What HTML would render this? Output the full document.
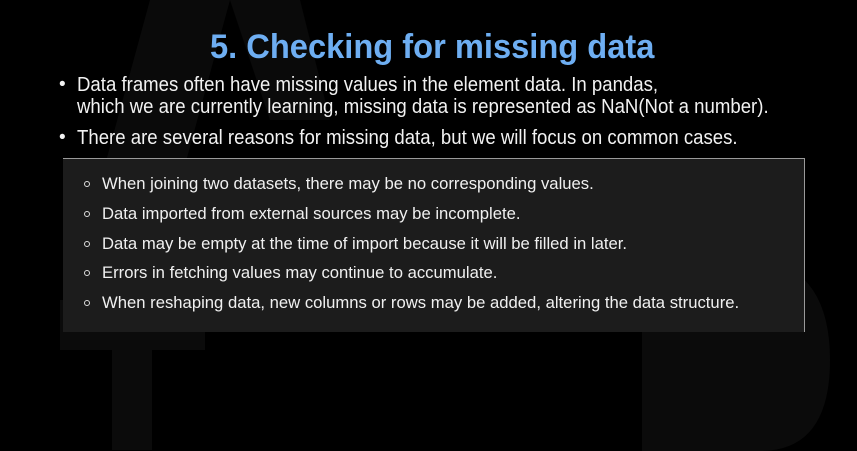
<!DOCTYPE html>
<html><head><meta charset="utf-8"><style>
html,body{margin:0;padding:0;background:#000;}
body{width:857px;height:451px;position:relative;overflow:hidden;font-family:"Liberation Sans","Noto Sans CJK KR",sans-serif;color:#f2f2f2;}
.t{position:absolute;white-space:nowrap;transform-origin:0 50%;}
.s{white-space:nowrap;height:29.8px;line-height:29.8px;position:relative;}
.s b{position:absolute;left:0;top:12px;width:4px;height:4px;border:1.3px solid #ddd;border-radius:50%;}
.s span{position:absolute;left:18px;display:inline-block;transform:scaleX(0.98);transform-origin:0 50%;}
</style></head><body>
<svg style="position:absolute;left:0;top:0" width="857" height="451">
<polygon points="60,330 150,0 230,0 140,330" fill="#0a0a0a"/>
<polygon points="230,0 300,0 330,120 270,120" fill="#0a0a0a"/>
<rect x="60" y="300" width="145" height="50" fill="#0b0b0b"/>
<rect x="112" y="260" width="40" height="190" fill="#0b0b0b"/>
<path d="M642 258 H760 Q830 270 830 360 Q830 451 760 451 H642 Z" fill="#0b0b0b"/>
</svg>
<div class="t" style="left:210px;top:27px;font-size:34px;font-weight:bold;color:#6eaef2;transform:scaleX(0.96);line-height:40px;">5. Checking for missing data</div>
<div class="t" style="left:59px;top:74px;font-size:19px;line-height:22px;">•</div>
<div class="t" style="left:77px;top:74px;font-size:20px;line-height:22px;transform:scaleX(0.93);">Data frames often have missing values in the element data. In pandas,</div>
<div class="t" style="left:77px;top:96px;font-size:20px;line-height:22px;transform:scaleX(0.93);">which we are currently learning, missing data is represented as NaN(Not a number).</div>
<div class="t" style="left:59px;top:127px;font-size:19px;line-height:22px;">•</div>
<div class="t" style="left:77px;top:127px;font-size:20px;line-height:22px;transform:scaleX(0.93);">There are several reasons for missing data, but we will focus on common cases.</div>
<div style="position:absolute;left:63px;top:158px;width:741px;height:173px;background:#1c1c1c;border-top:1px solid #9a9a9a;border-right:1px solid #9a9a9a;"></div>
<div style="position:absolute;left:84px;top:169px;font-size:17px;color:#f0f0f0;">
<div class="s"><b></b><span>When joining two datasets, there may be no corresponding values.</span></div>
<div class="s"><b></b><span>Data imported from external sources may be incomplete.</span></div>
<div class="s"><b></b><span>Data may be empty at the time of import because it will be filled in later.</span></div>
<div class="s"><b></b><span>Errors in fetching values may continue to accumulate.</span></div>
<div class="s"><b></b><span>When reshaping data, new columns or rows may be added, altering the data structure.</span></div>
</div>
</body></html>
